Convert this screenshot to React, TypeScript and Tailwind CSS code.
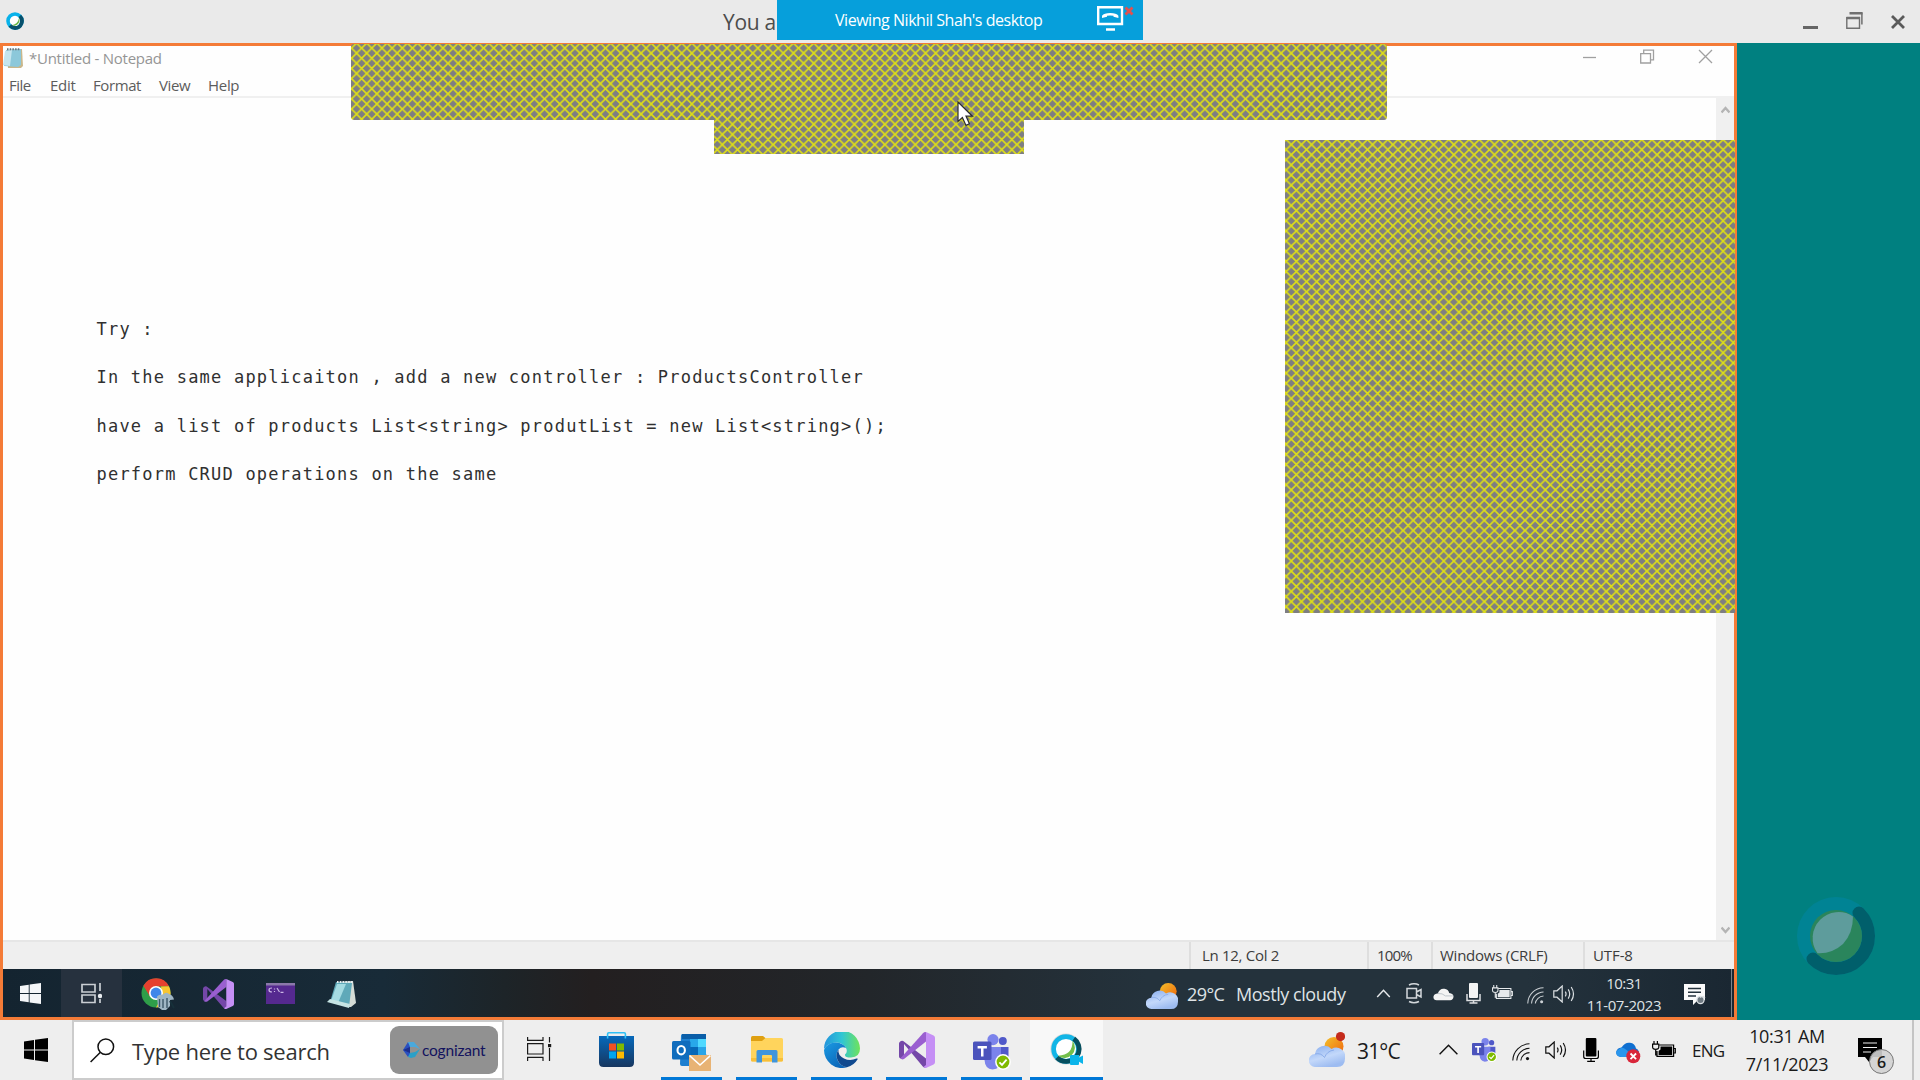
import type { ReactNode } from "react";

const UI = "font-['Open_Sans','Noto_Sans',sans-serif]";

function Hatch({ id, x, y, w, h, r = 0 }: { id: string; x: number; y: number; w: number; h: number; r?: number }) {
  return (
    <svg width={w} height={h} viewBox={`${x} ${y} ${w} ${h}`} className="block">
      <defs>
        <pattern id={id} x="702" y="53.2" width="10.16" height="10.156" patternUnits="userSpaceOnUse">
          <rect width="10.16" height="10.156" fill="#7e7e82" />
          <path d="M-2 -2L12.16 12.16M12.16 -2L-2 12.16" stroke="#f2f200" strokeOpacity="0.84" strokeWidth="1.6" />
        </pattern>
      </defs>
      <rect x={x} y={y} width={w} height={h} rx={r} fill={`url(#${id})`} />
    </svg>
  );
}

function Windows({ size, color }: { size: number; color: string }) {
  return (
    <svg width={size} height={size} viewBox="0 0 24 24" fill={color} className="block">
      <path d="M0 3.4L10 2V11.5H0zM11 1.8L24 0V11.5H11zM0 12.5H10V22L0 20.6zM11 12.5H24V24L11 22.2z" />
    </svg>
  );
}

function Chrome() {
  return (
    <svg width="34" height="34" viewBox="0 0 34 34">
      <circle cx="15" cy="15" r="14.5" fill="#2f9e49" />
      <path d="M2.4 7.8A14.5 14.5 0 0 1 28 8.3L15 8.5L9 18.5z" fill="#e5402f" />
      <path d="M28 8.3A14.5 14.5 0 0 1 15 29.5L21 18.5L20 8.4z" fill="#f8c630" />
      <circle cx="15" cy="15" r="7" fill="#fff" />
      <circle cx="15" cy="15" r="5.4" fill="#3f86ea" />
      <path d="M16 18.5Q18 16 22 16.5Q25 13.5 28 16Q32 17 33 21.5L29 22V28L25 32H21L17 29z" fill="#9fb6c4" />
      <path d="M18.5 21v8M22 21v9M26 20v10" stroke="#3c5768" strokeWidth="1.4" />
      <path d="M29 23L33 30" stroke="#17303a" strokeWidth="2" />
    </svg>
  );
}

function VisualStudio({ w, h }: { w: number; h: number }) {
  return (
    <svg width={w} height={h} viewBox="0 0 36 36" preserveAspectRatio="none">
      <path d="M1.2 9.6Q2.6 8.2 4.2 9L27 26.5V35.6Q25.4 36 24 34.8L5 12V24L1.6 26.6Q0 26 0 24.4V11.6Q0 10.4 1.2 9.6z" fill="#7447a8" />
      <path d="M1.3 26.6L24 1.2Q25.4-.2 27 .2V9.6L5 27Q3 28 1.3 26.6z" fill="#9a5fd0" />
      <path d="M27 .1L34.6 3.6Q36 4.3 36 5.8V30.2Q36 31.7 34.6 32.4L27 36Q25.5 36 24.5 35L27 33z" fill="#c58ff5" />
    </svg>
  );
}

function Wifi({ size, color }: { size: number; color: string }) {
  return (
    <svg width={size} height={size} viewBox="0 0 18 18" fill="none" stroke={color} strokeWidth="1.1">
      <path d="M.8 17.5A17 17 0 0 1 17.5.8M4.8 17.5A13 13 0 0 1 17.5 5.2M8.8 17.5A9 9 0 0 1 17.5 9.6" />
      <circle cx="15.5" cy="15.6" r="1.6" fill={color} stroke="none" />
    </svg>
  );
}

function Sound({ color }: { color: string }) {
  return (
    <svg width="23" height="18" viewBox="0 0 23 18" fill="none" stroke={color} strokeWidth="1.2">
      <path d="M.8 5.8H4L9.2 1V17L4 12.2H.8zM12.3 6.6Q13.8 9 12.3 11.4M15.2 4.4Q18.2 9 15.2 13.6M18.2 2Q22.8 9 18.2 16" />
    </svg>
  );
}

function Mic({ color }: { color: string }) {
  return (
    <svg width="16" height="24" viewBox="0 0 16 24">
      <rect x="2.8" width="10.6" height="18.5" rx="1" fill={color} />
      <path d="M.7 12.5V18.5Q.7 20.5 2.7 20.5H13.4Q15.4 20.5 15.4 18.5V12.5M8 20.5V23.4M4.2 23.4H12" fill="none" stroke={color} strokeWidth="1.2" />
    </svg>
  );
}

function Battery({ color, w = 24, h = 17 }: { color: string; w?: number; h?: number }) {
  return (
    <svg width={w} height={h} viewBox="0 0 24 17">
      <path d="M7.5 4H21.6V15.4H5V10M21.6 7.5H23.3V12H21.6M2 0V3M5.4 0V3M.6 3.2H6.8V6Q6.8 8.4 3.7 8.4Q.6 8.4.6 6zM3.7 8.4V14H5" fill="none" stroke={color} strokeWidth="1.2" />
      <path d="M8.5 5.5H20.2V14H6.6V10L8.5 8.5z" fill={color} />
    </svg>
  );
}

function Weather({ w, h, dot, id }: { w: number; h: number; dot?: boolean; id: string }) {
  return (
    <svg width={w} height={h} viewBox={dot ? "0 0 36 35" : "0 5 36 30"} preserveAspectRatio="none">
      <defs>
        <linearGradient id={id + "s"} x1="0" y1="0" x2="1" y2="1">
          <stop offset="0" stopColor="#f3c02c" />
          <stop offset="1" stopColor="#f0640a" />
        </linearGradient>
        <linearGradient id={id + "c"} x1="0" y1="0" x2=".5" y2="1">
          <stop offset="0" stopColor="#84abee" />
          <stop offset=".6" stopColor="#c3d8fa" />
          <stop offset="1" stopColor="#9dbcf1" />
        </linearGradient>
      </defs>
      <circle cx="25" cy="14.5" r="9.5" fill={`url(#${id}s)`} />
      <path d="M6.5 35A6.5 6.5 0 0 1 6 22A9.5 9.5 0 0 1 22.5 17A9 9 0 0 1 36 26.5Q36 35 28 35z" fill={`url(#${id}c)`} />
      <path d="M6 22Q12 20.5 15.5 25.5Q18 19 25 18" fill="none" stroke="#7fa3e6" strokeWidth=".8" />
      {dot && <circle cx="31.5" cy="4.6" r="4.6" fill="#c42b1c" />}
    </svg>
  );
}

function Store() {
  return (
    <svg width="35" height="35" viewBox="0 0 35 35">
      <defs>
        <linearGradient id="store" x1="0" y1="0" x2="0" y2="1">
          <stop offset="0" stopColor="#0669bb" />
          <stop offset="1" stopColor="#17365f" />
        </linearGradient>
      </defs>
      <path d="M0 4H35V30.5Q35 35 30.5 35H4.5Q0 35 0 30.5z" fill="url(#store)" />
      <path d="M8.6 6.5V2Q8.6.8 9.8.8H25.2Q26.4.8 26.4 2V6.5" fill="none" stroke="#2fc0f5" strokeWidth="1.6" />
      <path d="M10 11.5H17V18.5H10z" fill="#f25022" />
      <path d="M18 11.5H25V18.5H18z" fill="#7fba00" />
      <path d="M10 19.5H17V26.5H10z" fill="#00a4ef" />
      <path d="M18 19.5H25V26.5H18z" fill="#ffb900" />
    </svg>
  );
}

function Outlook() {
  return (
    <svg width="39" height="37" viewBox="0 0 39 37">
      <path d="M9 1.5Q9 0 10.5 0H32.5Q34 0 34 1.5V20L35 22V30Q35 32 33 32H10Q8 32 8 30z" fill="#1d7fd0" />
      <path d="M10 0H34V5H10z" fill="#0a5ea8" />
      <path d="M18 5H26V13H18z" fill="#28a8ea" />
      <path d="M26 5H34V13H26z" fill="#50d9ff" />
      <path d="M18 13H26V21H18z" fill="#0768b8" />
      <path d="M26 13H34V21H26z" fill="#2aa5e8" />
      <rect y="7" width="18.5" height="18.5" rx="1.5" fill="#0f6cbd" />
      <ellipse cx="9.2" cy="16.2" rx="3.7" ry="4.2" fill="none" stroke="#fff" strokeWidth="2.1" />
      <path d="M17 21H39V37H17z" fill="#e8b374" />
      <path d="M17.6 21.6L28 31L38.4 21.6" fill="none" stroke="#fff" strokeWidth="1.5" />
    </svg>
  );
}

function Folder() {
  return (
    <svg width="32" height="27" viewBox="0 0 32 27">
      <path d="M0 1.5Q0 0 1.5 0H12L15 2.5L13 6H0z" fill="#dfa012" />
      <path d="M0 5H11L14.5 2H30.5Q32 2 32 3.5V24Q32 25.5 30.5 25.5H1.5Q0 25.5 0 24z" fill="#ffd45c" />
      <path d="M0 22H32V24Q32 25.5 30.5 25.5H1.5Q0 25.5 0 24z" fill="#f7bf3a" />
      <path d="M5.5 26.5V15.5Q5.5 14 7 14H25Q26.5 14 26.5 15.5V26.5H21V20Q21 19 20 19H12Q11 19 11 20V26.5z" fill="#3f95dc" />
    </svg>
  );
}

function Edge() {
  return (
    <svg width="36" height="36" viewBox="0 0 36 36">
      <defs>
        <linearGradient id="edgeA" x1="0" y1=".3" x2="1" y2=".3">
          <stop offset="0" stopColor="#2394dd" />
          <stop offset=".5" stopColor="#30c6d4" />
          <stop offset="1" stopColor="#6fe35a" />
        </linearGradient>
        <linearGradient id="edgeB" x1="0" y1="0" x2=".7" y2="1">
          <stop offset="0" stopColor="#1b9be3" />
          <stop offset="1" stopColor="#0a64b8" />
        </linearGradient>
      </defs>
      <path d="M0 17A18 18 0 0 1 36 16.5Q36 25 27 25.5Q20.5 25.5 21 22.5Q23.5 20.5 22.5 17Q20 11 12.5 10.5Q4 10.5 0 17z" fill="url(#edgeA)" />
      <path d="M0 18Q3 10.5 12 10.5Q19.5 11 22 16Q17.5 14 14.5 17.5Q11 22 13.5 28Q16 34 23 35.3A18 18 0 0 1 0 18z" fill="url(#edgeB)" />
      <path d="M14.5 17.5Q11 23 13.5 28Q16.5 34.5 23 35.3Q30 33.5 33.8 27Q33.6 26 32.5 26.6Q26 29.5 20 26.5Q13.5 23 14.5 17.5z" fill="#10498f" />
    </svg>
  );
}

function Teams({ w, h }: { w: number; h: number }) {
  return (
    <svg width={w} height={h} viewBox="0 0 38 36" preserveAspectRatio="none">
      <circle cx="29.8" cy="7" r="4" fill="#5059c9" />
      <path d="M25 13H35.5V23Q35 29 29 29H25z" fill="#5059c9" />
      <circle cx="20" cy="5.6" r="5.6" fill="#7b83eb" />
      <path d="M12 13H28V25Q28 35.5 19.5 35.5Q12 35 11.5 26z" fill="#7b83eb" />
      <rect y="7.5" width="18.5" height="18.5" rx="1.5" fill="#4b53bc" />
      <path d="M4.6 12H13.9V14.4H10.5V22.4H8V14.4H4.6z" fill="#fff" />
      <circle cx="30" cy="28" r="7.9" fill="#fff" />
      <circle cx="30" cy="28" r="6.4" fill="#7fba00" />
      <path d="M26.4 28.3L29 30.9L33.6 25.6" fill="none" stroke="#fff" strokeWidth="1.8" />
    </svg>
  );
}

function WebexTask() {
  return (
    <svg width="34" height="33" viewBox="0 0 34 33">
      <circle cx="16" cy="16" r="15.6" fill="#d8d8d8" />
      <circle cx="16" cy="16" r="12.4" fill="#fff" stroke="#12b5e6" strokeWidth="4.6" />
      <path d="M23.8 5.8A12.4 12.4 0 0 1 16 28.4A12.4 12.4 0 0 1 7 24.5" fill="none" stroke="#064f5f" strokeWidth="4.8" />
      <path d="M22.5 7.8A10.5 10.5 0 0 1 8 22.8Q23 22 22.5 7.8z" fill="#74bf4b" />
      <path d="M21 22H29V24.5L33 22.5V31L29 28.8V31Q29 32 28 32H21Q20 32 20 31V23Q20 22 21 22z" fill="#0bb4ea" />
    </svg>
  );
}

function TaskView({ color, w, h }: { color: string; w: number; h: number }) {
  return (
    <svg width={w} height={h} viewBox="0 0 25 24" fill="none" stroke={color} strokeWidth="1.2">
      <path d="M.6 0V3.4H16V0M.6 6.6H16V17H.6zM.6 24V20.4H16V24M22.5 0V5.5M22.5 11V24" />
      <path d="M21 7H24.2V10.2H21z" fill={color} stroke="none" />
    </svg>
  );
}

function Cell({ children, active, run = true }: { children: ReactNode; active?: boolean; run?: boolean }) {
  return (
    <div className={`flex h-[60px] w-[75px] flex-none flex-col items-center ${active ? "px-px" : "px-[7px]"}`}>
      <div className={`flex h-[57px] w-full items-center justify-center pt-[2px] ${active ? "bg-[#f8f8f8]" : ""}`}>{children}</div>
      {run && <div className="h-[3px] w-full bg-[#0078d7]" />}
    </div>
  );
}

function MeetingBar() {
  return (
    <header className="relative flex h-[43px] flex-none items-center bg-[#eaeaea]">
      <svg width="18" height="18" viewBox="0 0 18 18" className="ml-[6px] -mt-[1px]">
        <circle cx="9" cy="9" r="7" fill="#fff" stroke="#08b2ea" strokeWidth="3.6" />
        <path d="M13.8 4A7 7 0 0 1 9 16A7 7 0 0 1 4 13.6" fill="none" stroke="#07506c" strokeWidth="3.8" />
        <path d="M13 6A5.4 5.4 0 0 1 6 13.2Q12 12 13 6z" fill="#67b346" />
      </svg>
      <div className={`${UI} ml-[699px] mt-[2px] w-[56px] whitespace-nowrap text-[21px] tracking-[-0.3px] text-[#4c4c4c]`}>You a</div>
      <div className="ml-auto flex h-full items-start text-[#666]">
        <div className="mt-[26px] h-[3px] w-[15px] bg-[#666]" />
        <svg width="17" height="17" viewBox="0 0 17 17" className="ml-[28px] mt-[12px]" fill="none" stroke="#707070">
          <path d="M4 1.3H15.9V12.5" strokeWidth="1.5" />
          <path d="M3.5 1.3H16.5M.5 6H14" strokeWidth="2.4" />
          <path d="M.8 5V16.2H13.5V5" strokeWidth="1.4" />
        </svg>
        <svg width="14" height="14" viewBox="0 0 14 14" className="ml-[28px] mr-[15px] mt-[15px]">
          <path d="M1 1L13 13M13 1L1 13" stroke="#5a5a5a" strokeWidth="2.8" />
        </svg>
      </div>
      <div className="absolute left-[777px] top-0 flex h-[40px] w-[366px] items-center bg-[#069fdb]">
        <div className={`${UI} ml-[58px] w-[210px] whitespace-nowrap text-[16px] tracking-[-0.46px] text-white`}>Viewing Nikhil Shah's desktop</div>
        <svg width="37" height="26" viewBox="0 0 37 26" className="ml-[52px] -mt-[2px]" fill="none">
          <path d="M1.2 1.2H25V18H1.2zM9 23.5H18" stroke="#fff" strokeWidth="2.4" />
          <path d="M5 12V9.8Q7 7 13.2 7Q19.5 7 21.4 9.8V12L16.5 10.8V9.8Q13 9 10 9.8V10.8z" fill="#fff" />
          <path d="M28.5 1.5L35.5 8.5M35.5 1.5L28.5 8.5" stroke="#e2504f" strokeWidth="2.8" />
        </svg>
      </div>
    </header>
  );
}

function Notepad() {
  return (
    <div className={`${UI} flex min-h-0 flex-1 flex-col bg-[#fefefe]`}>
      <div className="flex h-[26px] flex-none items-center">
        <svg width="21" height="21" viewBox="0 0 21 21" className="-mt-[3px]">
          <path d="M4 3L19 2L20 19L18 21H5z" fill="#c9b78b" />
          <path d="M3 3L18 2V18L15 20L1 19z" fill="#8cc8da" />
          <path d="M2 4L9 3L7 19L0 18z" fill="#c5e5ee" />
          <path d="M4 2.2H17" stroke="#63727a" strokeWidth="2" strokeDasharray="1.5 1.2" />
        </svg>
        <div className="ml-[5px] mt-[-1px] w-[140px] whitespace-nowrap text-[15px] tracking-[-0.26px] text-[#959595]">*Untitled - Notepad</div>
        <svg width="130" height="15" viewBox="0 0 130 15" className="mb-[6px] ml-auto mr-[21px]" fill="none" stroke="#a0a0a0" strokeWidth="1.3">
          <path d="M0 8.5H13" />
          <path d="M57.7 4.6H67.5V14H57.7zM60.7 4.6V1.2H70.5V10.8H67.5" />
          <path d="M116 1L129 14M129 1L116 14" />
        </svg>
      </div>
      <div className="flex h-[26px] flex-none items-center gap-[18px] border-b-2 border-[#f0f0f0] pl-[6px] pt-[2px] text-[15px] text-[#5c5c5c]">
        <div className="w-[23px] whitespace-nowrap tracking-[-0.5px]">File</div>
        <div className="w-[26px] whitespace-nowrap tracking-[-0.3px]">Edit</div>
        <div className="ml-[-1px] w-[49px] whitespace-nowrap tracking-[-0.4px]">Format</div>
        <div className="ml-[-1px] w-[32px] whitespace-nowrap tracking-[-0.4px]">View</div>
        <div className="ml-[-1px] w-[32px] whitespace-nowrap tracking-[-0.3px]">Help</div>
      </div>
      <div className="flex min-h-0 flex-1">
        <pre className="flex-1 pl-[93.5px] pt-[207px] font-['DejaVu_Sans_Mono',monospace] text-[17px] leading-[48.3px] tracking-[1.22px] text-[#303030]">
          {`Try :
In the same applicaiton , add a new controller : ProductsController
have a list of products List<string> produtList = new List<string>();
perform CRUD operations on the same`}
        </pre>
        <div className="flex w-[18px] flex-none flex-col items-center justify-between bg-[#f0f0f0] pb-[6px] pt-[8px]">
          <svg width="9" height="8" viewBox="0 0 9 8"><path d="M.5 6.5L4.5 2L8.5 6.5" fill="none" stroke="#b4b4b4" strokeWidth="2.4" /></svg>
          <svg width="9" height="8" viewBox="0 0 9 8"><path d="M.5 1.5L4.5 6L8.5 1.5" fill="none" stroke="#b4b4b4" strokeWidth="2.4" /></svg>
        </div>
      </div>
      <div className="flex h-[29px] flex-none justify-end border-t-2 border-[#e6e6e6] bg-[#efefef] text-[15px] leading-[26px] text-[#3c3c3c]">
        <div className="w-[178px] whitespace-nowrap border-l-2 border-[#dedede] pl-[11px] tracking-[-0.3px]">Ln 12, Col 2</div>
        <div className="w-[64px] whitespace-nowrap border-l-2 border-[#dedede] pl-[8px] tracking-[-0.8px]">100%</div>
        <div className="w-[152px] whitespace-nowrap border-l-2 border-[#dedede] pl-[7px] tracking-[-0.25px]">Windows (CRLF)</div>
        <div className="w-[151px] whitespace-nowrap border-l-2 border-[#dedede] pl-[8px] tracking-[-0.1px]">UTF-8</div>
      </div>
    </div>
  );
}

function RemoteTaskbar() {
  return (
    <div className={`${UI} flex h-[48px] flex-none items-center bg-[linear-gradient(90deg,#142430_0%,#182b38_22%,#1d2428_29%,#231f20_34%,#22262a_50%,#24323c_66%,#24323c_88%,#1a2732_100%)] pt-px text-[#dfe3e6]`}>
      <div className="ml-[17px] w-[21px]"><Windows size={21} color="#f4f6f8" /></div>
      <div className="-mt-px ml-[20px] flex h-[48px] w-[61px] items-center justify-center bg-[#26313e]">
        <svg width="21" height="21" viewBox="0 0 21 21" fill="none" stroke="#c9ced3" strokeWidth="1.7" className="mt-px">
          <path d="M1 1.5H14V9H1zM1 12H14V19.5H1zM19 0V8M19 16V20" />
          <circle cx="19" cy="13" r="2.2" fill="#e8ecef" stroke="none" />
        </svg>
      </div>
      <div className="ml-[19px] mt-[2px] w-[34px]"><Chrome /></div>
      <div className="ml-[28px] w-[31px]"><VisualStudio w={31} h={30} /></div>
      <svg width="29" height="21" viewBox="0 0 29 21" className="ml-[32px]">
        <path d="M0 0H29V21H0z" fill="#55298f" />
        <path d="M0 0H29V2.5H0z" fill="#8c79ab" />
        <path d="M6 5Q3 5 3 7Q3 9 6 9M8.5 5.5V6.5M8.5 8V9M11 5L13.5 9M14.5 9.3H17.5" fill="none" stroke="#c9b6e4" strokeWidth="1.2" />
      </svg>
      <svg width="30" height="28" viewBox="0 0 30 28" className="ml-[32px]">
        <path d="M10 2L26 1L29 23L24 27L21 27z" fill="#d5dcd6" />
        <path d="M9 2L25 3L22 27L3 22z" fill="#5fa9b9" />
        <path d="M10 4L19 4L11 23L4 21z" fill="#a4dbe2" />
        <path d="M3 19L0 22L22 28L23 24z" fill="#c6e4e4" />
        <path d="M10 2H26" stroke="#e8eef0" strokeWidth="2" strokeDasharray="1.5 1.3" />
      </svg>
      <div className="-ml-px mt-[5px] w-[32px] [margin-left:auto]"><Weather w={32} h={26} id="rw" /></div>
      <div className="ml-[9px] mt-px w-[36px] whitespace-nowrap text-[18px] tracking-[-0.6px]">29°C</div>
      <div className="ml-[13px] mt-px w-[111px] whitespace-nowrap text-[18px] tracking-[-0.45px]">Mostly cloudy</div>
      <svg width="15" height="9" viewBox="0 0 16 10" className="ml-[29px]"><path d="M1 9L8 1.5L15 9" fill="none" stroke="#e6e9eb" strokeWidth="1.6" /></svg>
      <svg width="16" height="21" viewBox="0 0 16 21" className="ml-[15px]" fill="none" stroke="#d3d8db" strokeWidth="1.5">
        <path d="M1 5.5H10.5V15H1zM10.5 9L15 6.5V14L10.5 11.5M3 2Q8-.5 13 2M3 18.5Q8 21 13 18.5" />
      </svg>
      <svg width="21" height="14" viewBox="0 0 22 14" className="ml-[11px]">
        <path d="M4 13.5Q0 13 .5 9.5Q1.5 6.5 5 6.5Q7 .8 12 1.5Q16 2 17 6Q21.5 6.5 21.5 10Q21 13.5 18 13.5z" fill="#f4f4f4" />
        <path d="M5 6.5Q10 6 13 9L21 9" fill="none" stroke="#bcc3c8" />
      </svg>
      <div className="ml-[11px] flex w-[16px] justify-center"><svg width="15" height="21" viewBox="0 0 15 21"><rect x="3" width="9" height="15" rx="1" fill="#f5f5f5" /><path d="M1 11V17.5H14V11M7.5 17.5V20M3.5 20H11.5" fill="none" stroke="#dde0e2" strokeWidth="1.5" /></svg></div>
      <div className="ml-[11px] mt-[-2px] w-[24px]"><Battery color="#e6e9eb" w={21} h={15} /></div>
      <div className="ml-[11px] mt-[3px] w-[17px]"><Wifi size={17} color="#ccd1d5" /></div>
      <div className="ml-[9px] w-[23px]"><Sound color="#dce0e3" /></div>
      <div className="ml-[9px] w-[78px] whitespace-nowrap text-center text-[15px] leading-[22px] tracking-[-0.5px]">
        <div>10:31</div>
        <div className="tracking-[-0.4px]">11-07-2023</div>
      </div>
      <svg width="23" height="22" viewBox="0 0 23 22" className="ml-[21px] mt-[3px]">
        <path d="M0 0H21V16H14L9 21V16H0z" fill="#fbfbfb" />
        <path d="M4 4.5H17M4 8.2H17M4 12H12" stroke="#24323c" strokeWidth="1.4" />
        <circle cx="16.5" cy="16" r="3.6" fill="#6f7a82" stroke="#dfe3e6" strokeWidth="1.2" />
        <path d="M16 13.5Q20 11 21 14" fill="none" stroke="#dfe3e6" />
      </svg>
      <div className="-mt-px ml-[24px] mr-[2px] h-[48px] w-px bg-[#7b858c]" />
    </div>
  );
}

function SharedScreen() {
  return (
    <section className="relative flex h-[977px] w-[1737px] flex-none flex-col border-[3px] border-[#f47b37]">
      <Notepad />
      <RemoteTaskbar />
      <div className="absolute left-[348px] top-[-2px]"><Hatch id="hatchTop" x={351} y={44} w={1036} h={76} r={3} /></div>
      <div className="absolute left-[711px] top-[73px]"><Hatch id="hatchTab" x={714} y={119} w={310} h={35} /></div>
      <div className="absolute left-[1282px] top-[94px]"><Hatch id="hatchSide" x={1285} y={140} w={450} h={473} /></div>
      <svg width="18" height="27" viewBox="0 0 18 27" className="absolute left-[954px] top-[55px]">
        <path d="M1 1V20.5L5.4 16.5L9 24.4L12.4 22.8L9 15.2H15.4z" fill="#fff" stroke="#2c2c30" strokeWidth="1.2" />
      </svg>
    </section>
  );
}

function Stage() {
  return (
    <aside className="flex flex-1 items-end justify-center bg-[#008080] pb-[44px] pl-[15px]">
      <svg width="80" height="80" viewBox="-40 -40 80 80">
        <circle r="39" fill="#008394" />
        <path d="M23 -23A32.5 32.5 0 0 1 -23 23" fill="none" stroke="#005f6b" strokeWidth="13" strokeLinecap="round" />
        <circle r="26" fill="#2a855c" />
        <path d="M17 -19.6A26 26 0 0 0 -18.5 17.2Q-4 18 7 8Q17 -3 17 -19.6z" fill="#5e9c9c" />
      </svg>
    </aside>
  );
}

function LocalTaskbar() {
  return (
    <footer className={`${UI} flex h-[60px] flex-none items-center bg-[#eeeeee] text-[#1a1a1a]`}>
      <div className="ml-[24px] w-[24px]"><Windows size={24} color="#000" /></div>
      <div className="ml-[24px] flex h-[60px] w-[432px] items-center border-2 border-[#cccccc] bg-white">
        <svg width="25" height="25" viewBox="0 0 25 25" className="ml-[16px]" fill="none" stroke="#111" strokeWidth="1.5">
          <circle cx="15.8" cy="8.8" r="7.8" /><path d="M10.4 14.2L.6 24" />
        </svg>
        <div className="ml-[17px] mt-[2px] w-[200px] whitespace-nowrap text-[22px] tracking-[-0.25px] text-[#333]">Type here to search</div>
        <div className="ml-[58px] flex h-[48px] w-[108px] items-center rounded-[9px] bg-[#919191] pl-[13px]">
          <svg width="17" height="16" viewBox="0 0 17 16">
            <path d="M0 8L5 0L8 4L5 8L8 12L5 15z" fill="#2b50c0" />
            <path d="M5 0H11L17 7L12 5H7z" fill="#4aa9dc" />
            <path d="M5 15L7 11L12 10L17 7L12 15L8 16z" fill="#2aa0c8" />
            <path d="M0 8L7 5V11z" fill="#1d2f8c" />
          </svg>
          <div className="-mt-px ml-[2px] whitespace-nowrap font-['Lato',sans-serif] text-[15.5px] leading-[18px] tracking-[-0.2px] text-[#13135e]">cognizant</div>
        </div>
      </div>
      <div className="ml-[23px] mt-[-2px] w-[52px]"><TaskView color="#1a1a1a" w={25} h={24} /></div>
      <Cell run={false}><Store /></Cell>
      <Cell><div className="mt-[5px]"><Outlook /></div></Cell>
      <Cell><Folder /></Cell>
      <Cell><Edge /></Cell>
      <Cell><VisualStudio w={36} h={36} /></Cell>
      <Cell><div className="mt-[5px]"><Teams w={38} h={36} /></div></Cell>
      <Cell active><WebexTask /></Cell>
      <div className="ml-auto mt-[-1px] w-[36px]"><Weather w={36} h={35} dot id="lw" /></div>
      <div className="ml-[12px] mt-[3px] w-[45px] whitespace-nowrap text-[21px] tracking-[-0.85px]">31°C</div>
      <svg width="19" height="11" viewBox="0 0 19 11" className="ml-[37px] mt-[-2px]"><path d="M.6 10.3L9.5 1.2L18.4 10.3" fill="none" stroke="#111" strokeWidth="1.4" /></svg>
      <div className="ml-[14px] w-[25px]"><Teams w={25} h={24} /></div>
      <div className="ml-[15px] mt-[3px] w-[18px]"><Wifi size={18} color="#111" /></div>
      <div className="ml-[15px] w-[23px]"><Sound color="#111" /></div>
      <div className="ml-[15px] w-[16px]"><Mic color="#000" /></div>
      <svg width="25" height="22" viewBox="0 0 25 22" className="ml-[17px] mt-[5px]">
        <path d="M5 15Q0 14.5.2 10Q1 5.8 5.5 5.5Q9 0 14 .8Q19 1.5 20 6.5Q24 7.5 23 15z" fill="#0f6fd0" />
        <path d="M5.5 5.5Q10 6 18 15H5Q-1 14 .5 9z" fill="#2a96ec" />
        <circle cx="17.3" cy="14.3" r="7" fill="#d9263a" />
        <path d="M14.5 11.5L20.1 17.1M20.1 11.5L14.5 17.1" stroke="#fff" strokeWidth="1.8" />
      </svg>
      <div className="ml-[11px] mt-[-1px] w-[24px]"><Battery color="#000" /></div>
      <div className="ml-[16px] mt-[2px] w-[35px] whitespace-nowrap text-[17px] tracking-[-0.75px]">ENG</div>
      <div className="ml-[16px] w-[88px] whitespace-nowrap text-center text-[18px] leading-[28px] tracking-[-0.3px]">
        <div>10:31 AM</div>
        <div>7/11/2023</div>
      </div>
      <div className="relative ml-[27px] h-[24px] w-[36px]">
        <svg width="24" height="24" viewBox="0 0 24 24"><path d="M0 0H24V19H15L11 24L7 19H0z" fill="#000" /><path d="M5 5H19M5 9.5H19M5 14H13" stroke="#eee" strokeWidth="1.2" /></svg>
        <div className="absolute left-[11px] top-[11px] flex size-[25px] items-center justify-center rounded-full border border-[#777] bg-[#d2d2d2]/90 text-[16px] font-semibold leading-none">6</div>
      </div>
      <div className="ml-[18px] mr-[6px] h-full w-[2px] bg-[#c4c4c4]" />
    </footer>
  );
}

export default function App() {
  return (
    <div className="flex h-[1080px] w-[1920px] flex-col overflow-hidden bg-white">
      <MeetingBar />
      <main className="flex h-[977px] flex-none">
        <SharedScreen />
        <Stage />
      </main>
      <LocalTaskbar />
    </div>
  );
}
